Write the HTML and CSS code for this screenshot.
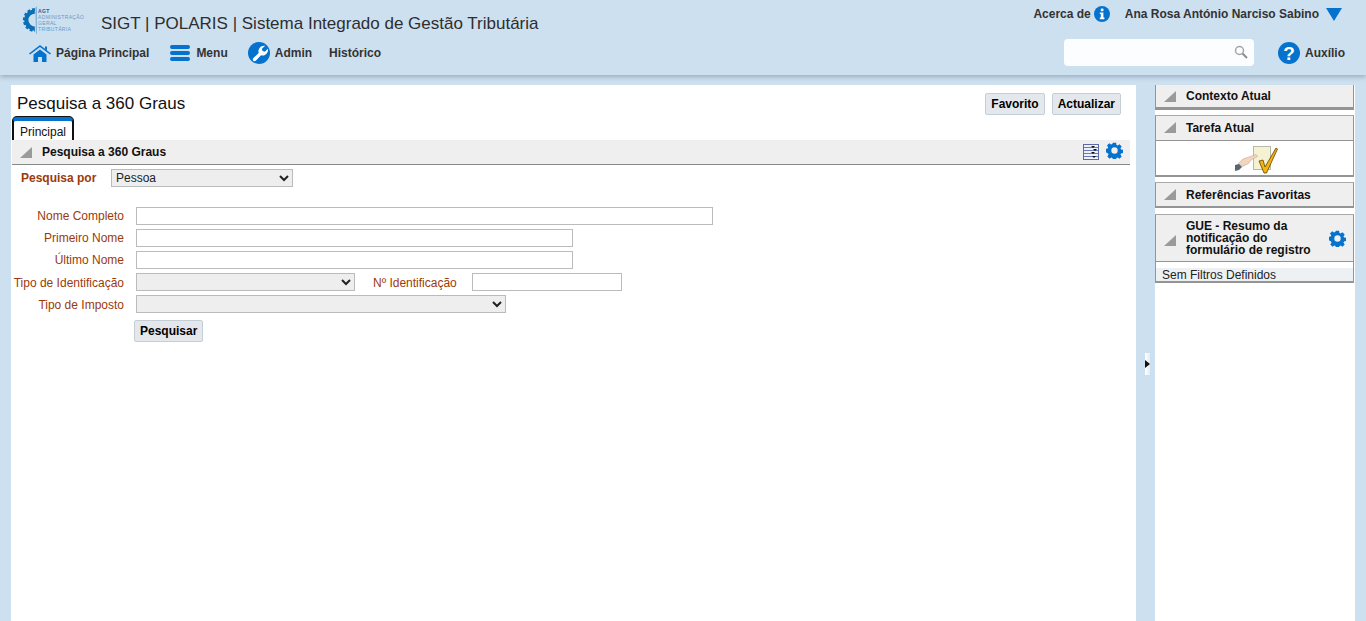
FILE: index.html
```html
<!DOCTYPE html>
<html lang="pt">
  <head>
    <meta charset="UTF-8" />
    <title>SIGT | POLARIS</title>
    <link rel="stylesheet" href="styles.css">
  </head>
  <body>
    <header class="topo">
      <div class="topo-linha1">
        <div class="logo">
          <svg width="17" height="28" viewBox="0 0 16 26">
            <path d="M13 5a8 8 0 0 0 0 16" fill="none" stroke="#0b6fb8" stroke-width="4"/>
            <path d="M13 3a10 10 0 0 0 0 20" fill="none" stroke="#0b6fb8" stroke-width="2.500" stroke-dasharray="2.600 1.800"/>
            <path d="M13.500 1.500l1.500-1.500v26h-1z" fill="#7fb2d8"/>
          </svg>
          <div class="logo-texto">
            <b>AGT</b>
            <span>ADMINISTRAÇÃO</span>
            <span>GERAL</span>
            <span>TRIBUTÁRIA</span>
          </div>
        </div>
        <div class="sistema">SIGT | POLARIS | Sistema Integrado de Gestão Tributária</div>
        <div class="topo-dir">
          <a class="lnk">Acerca de</a>
          <svg class="ico-info" width="16" height="16" viewBox="0 0 16 16">
            <circle cx="8" cy="8" r="8" fill="#0572ce"/>
            <rect x="6.800" y="2.600" width="2.600" height="2.600" fill="#fff"/>
            <path d="M5.800 6.400h3.600v5.200h1v1.600H5.800v-1.600h1V8H5.800z" fill="#fff"/>
          </svg>
          <a class="lnk usuario">Ana Rosa António Narciso Sabino</a>
          <span class="seta-baixo"></span>
        </div>
      </div>
      <div class="topo-linha2">
        <nav class="menu">
          <a class="lnk item-home">
            <svg width="22" height="18" viewBox="0 0 22 18">
              <path d="M0 9.500L11 1l11 8.500-1 1L11 3 1 10.500z" fill="#0572ce"/>
              <path d="M16 2.500h2v4l-2-1.500z" fill="#0572ce"/>
              <path d="M4.500 10.500L11 5.500l6.500 5V18h-4.500v-5H9v5H4.500z" fill="#0572ce"/>
            </svg>
            Página Principal
          </a>
          <a class="lnk item-menu">
            <span class="barras"><i></i><i></i><i></i></span>
            Menu
          </a>
          <a class="lnk item-admin">
            <svg width="22" height="22" viewBox="0 0 22 22">
              <circle cx="11" cy="11" r="11" fill="#0572ce"/>
              <path d="M17.200 3.800l-3.300 3 .6 2.300 2.300.6 3.100-2.900c.6 3-1 5.800-3.900 6.600-1.100.3-2.100.2-3-.1l-5.200 5.500c-1.700 1.400-4-.8-2.600-2.600l5.500-5.200c-.4-1.100-.4-2.200 0-3.300 1-2.900 3.700-4.500 6.500-3.900z" fill="#fff"/>
            </svg>
            Admin
          </a>
          <a class="lnk item-hist">Histórico</a>
        </nav>
        <div class="busca">
          <svg width="14" height="14" viewBox="0 0 14 14">
            <circle cx="5.500" cy="5.500" r="4" fill="none" stroke="#a4a4a4" stroke-width="1.500"/>
            <path d="M8.500 8.500l4.500 4.500" stroke="#8e8e8e" stroke-width="2"/>
          </svg>
        </div>
        <a class="lnk auxilio">
          <svg width="22" height="22" viewBox="0 0 22 22">
            <circle cx="11" cy="11" r="11" fill="#0572ce"/>
            <text x="11" y="17.500" class="ico-q">?</text>
          </svg>
          Auxílio
        </a>
      </div>
    </header>

    <div class="corpo">
      <main class="painel">
        <div class="titulo-linha">
          <h1>Pesquisa a 360 Graus</h1>
          <div class="titulo-botoes">
            <button class="btn">Favorito</button>
            <button class="btn">Actualizar</button>
          </div>
        </div>
        <div class="abas"><span class="aba">Principal</span></div>
        <div class="secao">
          <span class="tri"></span>
          <h2>Pesquisa a 360 Graus</h2>
          <div class="secao-icones">
            <svg width="16" height="16" viewBox="0 0 16 16">
              <rect x=".5" y=".5" width="15" height="15" fill="#eef1fb" stroke="#5a6aa8"/>
              <path d="M1 3.500h14M1 6.500h14M1 9.500h14M1 12.500h14" stroke="#6a7ab8"/>
              <path d="M8 2h4l-2 2zM10 5h4l-2 2zM8 8h4l-2 2zM9 12h4l-2 2z" fill="#111"/>
            </svg>
            <svg class="engrenagem" width="17" height="17" viewBox="0 0 24 24"><use href="#gear"/></svg>
          </div>
        </div>
        <div class="pesquisa-por">
          <label class="rot-forte">Pesquisa por</label>
          <select class="sel-pessoa"><option>Pessoa</option></select>
        </div>
        <form class="campos">
          <div class="linha">
            <label>Nome Completo</label>
            <input class="w-577" type="text" />
          </div>
          <div class="linha">
            <label>Primeiro Nome</label>
            <input class="w-437" type="text" />
          </div>
          <div class="linha">
            <label>Último Nome</label>
            <input class="w-437" type="text" />
          </div>
          <div class="linha linha-sel">
            <label>Tipo de Identificação</label>
            <select class="w-219"><option></option></select>
            <label class="rot-id">Nº Identificação</label>
            <input class="w-150" type="text" />
          </div>
          <div class="linha linha-sel">
            <label>Tipo de Imposto</label>
            <select class="w-370"><option></option></select>
          </div>
          <div class="linha-botao"><button type="button" class="btn">Pesquisar</button></div>
        </form>
      </main>

      <div class="divisor"><span class="puxador"></span></div>

      <aside class="lateral">
        <section class="caixa caixa-contexto">
          <div class="caixa-cab"><span class="tri"></span><h3>Contexto Atual</h3></div>
        </section>
        <section class="caixa">
          <div class="caixa-cab cab-tarefa com-linha"><span class="tri"></span><h3>Tarefa Atual</h3></div>
          <div class="tarefa">
            <svg width="44" height="28" viewBox="0 0 44 28">
              <rect x="18.500" y=".5" width="17" height="23" fill="#f5f2d4" stroke="#b9b9a8"/>
              <path d="M3 18l5-5 6-2 7-2.500 1.500 2-6 3-3 4-6 3z" fill="#f2d5bd" stroke="#b89a84" stroke-width=".5"/>
              <path d="M0 19l4-1 3 3-3 3-4 1z" fill="#566770"/>
              <path d="M24 15l4-1 2 7 11-19 1.500 1-11 24h-2.500z" fill="#f2b20f" stroke="#5c4500" stroke-width=".8"/>
            </svg>
          </div>
        </section>
        <section class="caixa caixa-ref">
          <div class="caixa-cab"><span class="tri"></span><h3>Referências Favoritas</h3></div>
        </section>
        <section class="caixa">
          <div class="caixa-cab cab-alta com-linha">
            <span class="tri"></span>
            <h3>GUE - Resumo da notificação do formulário de registro</h3>
            <svg class="engrenagem" width="17" height="17" viewBox="0 0 24 24"><use href="#gear"/></svg>
          </div>
          <div class="filtros">Sem Filtros Definidos</div>
        </section>
      </aside>
    </div>

    <svg width="0" height="0" class="defs">
      <symbol id="gear" viewBox="0 0 24 24">
        <path fill="#0572ce" fill-rule="evenodd" d="M9.500 0h5l.6 3.300 1.900.8 2.800-1.900 3.500 3.500-1.900 2.800.8 1.900 3.300.6v5l-3.300.6-.8 1.900 1.900 2.800-3.500 3.500-2.800-1.900-1.900.8-.6 3.300h-5l-.6-3.300-1.900-.8-2.800 1.900-3.500-3.500 1.900-2.800-.8-1.900L-2 14.500v-5l3.300-.6.800-1.900-1.900-2.800 3.500-3.500 2.800 1.900 1.900-.8zM12 7a5 5 0 1 0 0 10 5 5 0 0 0 0-10z" transform="translate(1.200 1.200) scale(.9)"/>
      </symbol>
    </svg>
  </body>
</html>
```

FILE: styles.css
```css
* {
  box-sizing: border-box;
}

html,
body {
  height: 100%;
}

body {
  margin: 0;
  overflow: hidden;
  background: #cde0f0;
  font-family: "Liberation Sans", Arial, sans-serif;
  font-size: 12px;
  color: #000;
}

.defs {
  position: absolute;
}

/* topo */
.topo {
  height: 75px;
  background: #cde0f0;
  box-shadow: 0 2px 5px rgba(90, 110, 130, 0.45);
  color: #333;
}

.topo-linha1 {
  display: flex;
  height: 37px;
  padding-left: 21px;
}

.logo {
  display: flex;
  align-items: center;
  width: 80px;
  height: 37px;
  padding-top: 3px;
}

.logo-texto {
  display: flex;
  flex-direction: column;
  font-size: 5px;
  line-height: 6px;
  letter-spacing: 0.35px;
  color: #5f9cc8;
  white-space: nowrap;
}

.logo-texto b {
  color: #1d5f92;
}

.sistema {
  margin-top: 14px;
  font-size: 17px;
  line-height: 20px;
  color: #2e2e2e;
}

.topo-dir {
  display: flex;
  align-items: center;
  height: 28px;
  margin-left: auto;
  padding-right: 24px;
}

.lnk {
  display: flex;
  align-items: center;
  font-weight: bold;
  color: #333;
  white-space: nowrap;
}

.ico-info {
  margin-left: 3px;
}

.usuario {
  margin-left: 15px;
}

.seta-baixo {
  width: 0;
  height: 0;
  margin-left: 7px;
  border-left: 8px solid transparent;
  border-right: 8px solid transparent;
  border-top: 13px solid #0572ce;
}

.topo-linha2 {
  display: flex;
  align-items: center;
  height: 30px;
  padding-right: 21px;
}

.menu {
  display: flex;
  align-items: center;
  margin-top: 2px;
  margin-right: auto;
  padding-left: 29px;
}

.item-home svg {
  margin-right: 5px;
}

.item-menu {
  margin-left: 21px;
}

.barras {
  display: flex;
  flex-direction: column;
  gap: 2px;
  margin-right: 6px;
}

.barras i {
  display: block;
  width: 20px;
  height: 4px;
  border-radius: 2px;
  background: #0572ce;
}

.item-admin {
  margin-left: 20px;
}

.item-admin svg {
  margin-right: 5px;
}

.item-hist {
  margin-left: 17px;
}

.busca {
  display: flex;
  align-items: center;
  justify-content: flex-end;
  width: 190px;
  height: 27px;
  padding-right: 6px;
  background: #fcfdff;
  border-radius: 4px;
}

.auxilio {
  margin-top: 2px;
  margin-left: 24px;
}

.auxilio svg {
  margin-right: 5px;
}

.ico-q {
  fill: #fff;
  font-size: 19px;
  font-weight: bold;
  text-anchor: middle;
}

/* corpo */
.corpo {
  display: flex;
  height: 546px;
  margin-top: 10px;
  padding-left: 11px;
}

.painel {
  width: 1125px;
  height: 100%;
  padding-left: 1px;
  background: #fff;
}

.titulo-linha {
  display: flex;
  align-items: flex-start;
  justify-content: space-between;
  height: 32px;
  padding: 8px 15px 0 5px;
}

h1 {
  margin: 1px 0 0;
  font-size: 17px;
  font-weight: normal;
  line-height: 20px;
  color: #111;
}

.titulo-botoes {
  display: flex;
  gap: 7px;
}

.btn {
  height: 22px;
  padding: 0 5px;
  background: #e4e8ec;
  border: 1px solid #c4ced7;
  border-radius: 2px;
  font-family: inherit;
  font-size: 12px;
  font-weight: bold;
  color: #000;
}

.abas {
  display: flex;
  height: 23px;
}

.aba {
  width: 62px;
  height: 23px;
  padding-top: 4px;
  background: #fff;
  border: 2px solid #111;
  border-top: 4px solid #0572ce;
  border-bottom: 0;
  border-radius: 5px 5px 0 0;
  box-shadow: 0 -1px 0 #111;
  font-size: 12px;
  line-height: 14px;
  text-align: center;
  color: #111;
}

.secao {
  display: flex;
  align-items: center;
  width: 1118px;
  height: 25px;
  padding-left: 8px;
  background: #efefef;
  border-bottom: 1px solid #888;
}

.tri {
  flex: none;
  width: 0;
  height: 0;
  border-left: 12px solid transparent;
  border-bottom: 11px solid #9a9a9a;
}

h2 {
  margin: 0 0 0 10px;
  font-size: 12px;
  font-weight: bold;
  color: #111;
}

.secao-icones {
  display: flex;
  align-items: flex-start;
  gap: 7px;
  height: 16px;
  margin-left: auto;
  padding-right: 7px;
}

.secao-icones .engrenagem {
  margin-top: -2px;
}

.pesquisa-por {
  display: flex;
  align-items: center;
  height: 18px;
  margin-top: 4px;
  padding-left: 9px;
}

.rot-forte {
  width: 90px;
  font-weight: bold;
  color: #9c3a0a;
}

select {
  height: 18px;
  margin: 0;
  padding: 0;
  background: #eee;
  border: 1px solid #bbb;
  border-radius: 0;
  font-family: inherit;
  font-size: 12px;
  color: #222;
}

.sel-pessoa {
  width: 182px;
}

.campos {
  display: flex;
  flex-direction: column;
  gap: 4px;
  margin-top: 20px;
}

.linha {
  display: flex;
  align-items: center;
  height: 18px;
}

.linha label {
  flex: none;
  width: 112px;
  margin-right: 12px;
  text-align: right;
  color: #9c3a0a;
  white-space: nowrap;
}

.linha-sel label {
  padding-top: 2px;
}

input {
  height: 18px;
  margin: 0;
  padding: 0 2px;
  background: #fff;
  border: 1px solid #bbb;
}

.w-577 {
  width: 577px;
}

.w-437 {
  width: 437px;
}

.w-219 {
  width: 219px;
}

.w-370 {
  width: 370px;
}

.w-150 {
  width: 150px;
}

.linha .rot-id {
  width: auto;
  margin: 0 15px 0 18px;
}

.linha-botao {
  margin-top: 3px;
  padding-left: 122px;
}

/* divisor */
.divisor {
  position: relative;
  width: 19px;
}

.puxador {
  position: absolute;
  top: 268px;
  left: 9px;
  width: 5px;
  height: 22px;
  background: linear-gradient(to right, #fff, #e6edf3);
}

.puxador::after {
  content: "";
  position: absolute;
  top: 7px;
  left: 0;
  border-top: 4px solid transparent;
  border-bottom: 4px solid transparent;
  border-left: 5px solid #111;
}

/* coluna lateral */
.lateral {
  display: flex;
  flex-direction: column;
  gap: 5px;
  width: 200px;
  height: 100%;
  background: #fff;
}

.caixa {
  width: 199px;
  border: 1px solid #949494;
  border-top-color: #aaa;
  border-bottom-width: 2px;
  background: #fff;
}

.caixa-contexto {
  border-top: 0;
  border-bottom-width: 3px;
}

.caixa-ref {
  margin-bottom: 1px;
}

.caixa-cab {
  display: flex;
  align-items: center;
  height: 23px;
  padding-left: 8px;
  background: #efefef;
}

.caixa-contexto .caixa-cab {
  height: 22px;
}

.cab-tarefa {
  height: 25px;
  padding-bottom: 1px;
}

.caixa-cab .tri {
  margin-right: 10px;
}

h3 {
  margin: 0;
  font-size: 12px;
  font-weight: bold;
  line-height: 12px;
  color: #111;
}

.com-linha {
  border-bottom: 1px solid #949494;
}

.tarefa {
  display: flex;
  justify-content: center;
  height: 34px;
  padding: 5px 0 0 5px;
  overflow: hidden;
}

.cab-alta {
  height: 47px;
}

.cab-alta .tri {
  margin-top: 4px;
}

.cab-alta h3 {
  width: 132px;
}

.cab-alta .engrenagem {
  margin-left: 11px;
}

.filtros {
  height: 13px;
  margin-top: 6px;
  padding-left: 6px;
  background: #eef1f4;
  font-size: 12px;
  line-height: 14px;
  color: #222;
}
```
